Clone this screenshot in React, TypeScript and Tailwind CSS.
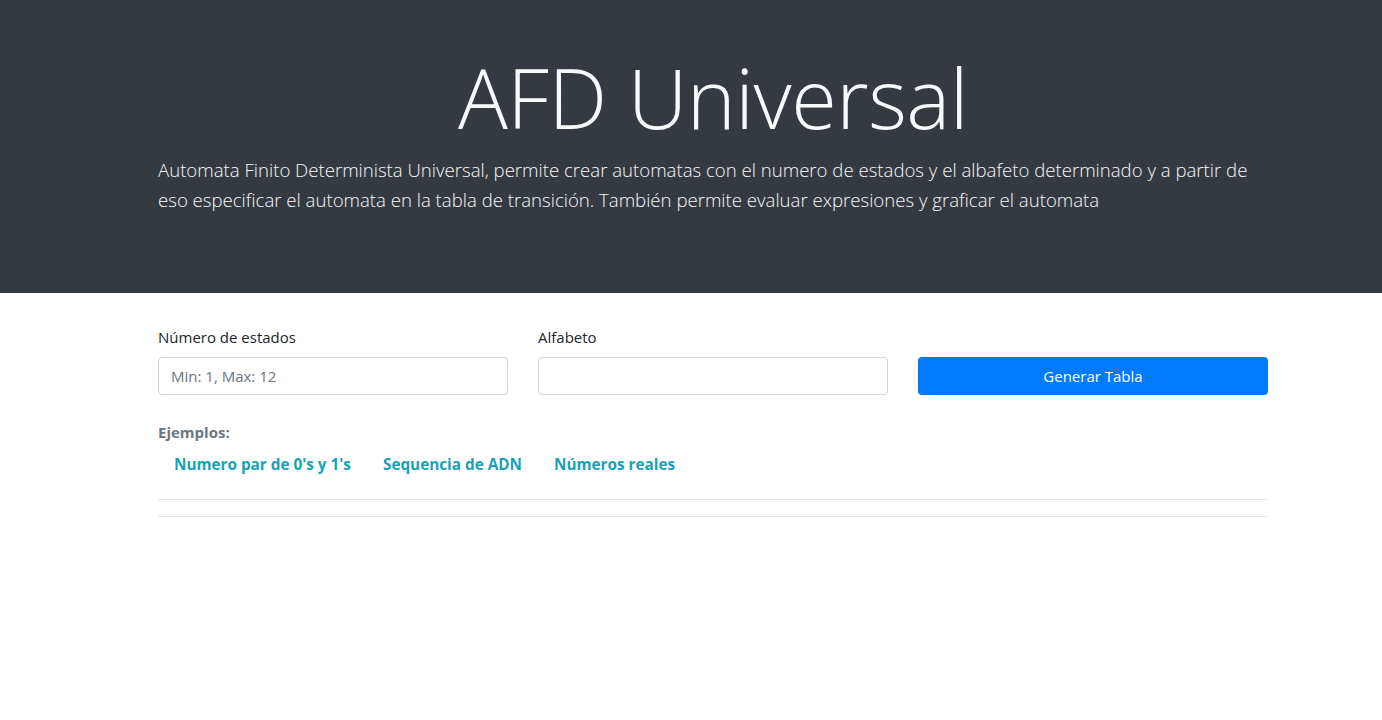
const App = () => {
	return (
		<div className="min-h-[720px] bg-white text-[#212529]" style={{ fontFamily: '"Open Sans", "Liberation Sans", sans-serif' }}>
			{/* Jumbotron */}
			<div className="h-[293px] bg-[#343a40] text-[#f8f9fa]">
				<div className="ml-[158px] w-[1110px] pt-[42px]">
					<h1 className="text-center text-[83px] font-light leading-[110px] tracking-[-0.5px]">AFD Universal</h1>
					<p className="mt-[3px] text-[18.6px] font-light leading-[30px]">
						Automata Finito Determinista Universal, permite crear automatas con el numero de estados y el albafeto determinado y a partir de eso especificar el automata en la tabla de transición. También permite evaluar expresiones y graficar el automata
					</p>
				</div>
			</div>

			{/* Formulario */}
			<div className="ml-[158px] w-[1110px] pt-[33px]">
				<div className="grid grid-cols-3 gap-x-[30px]">
					<div>
						<label className="block text-[15px] leading-[22px] mb-[9px]">Número de estados</label>
						<input
							type="text"
							placeholder="Min: 1, Max: 12"
							className="w-full h-[38px] px-3 rounded border border-[#ced4da] text-[15px] placeholder:text-[#6c757d] outline-none"
						/>
					</div>
					<div>
						<label className="block text-[15px] leading-[22px] mb-[9px]">Alfabeto</label>
						<input type="text" className="w-full h-[38px] px-3 rounded border border-[#ced4da] text-[15px] outline-none" />
					</div>
					<div className="flex items-end">
						<button className="w-full h-[38px] rounded bg-[#007bff] text-white text-[15px]">Generar Tabla</button>
					</div>
				</div>

				<div className="mt-[26px] text-[15px] font-bold text-[#6c757d] leading-[22px]">Ejemplos:</div>
				<ul className="flex mt-[10px]">
					<li><a href="#" className="block px-4 text-[15.3px] font-bold text-[#17a2b8] leading-[22px]">Numero par de 0's y 1's</a></li>
					<li><a href="#" className="block px-4 text-[15.3px] font-bold text-[#17a2b8] leading-[22px]">Sequencia de ADN</a></li>
					<li><a href="#" className="block px-4 text-[15.3px] font-bold text-[#17a2b8] leading-[22px]">Números reales</a></li>
				</ul>

				<hr className="mt-[24px] border-[#e5e5e5]" />
				<hr className="mt-[16px] border-[#e5e5e5]" />
			</div>
		</div>
	);
};

export default App;
